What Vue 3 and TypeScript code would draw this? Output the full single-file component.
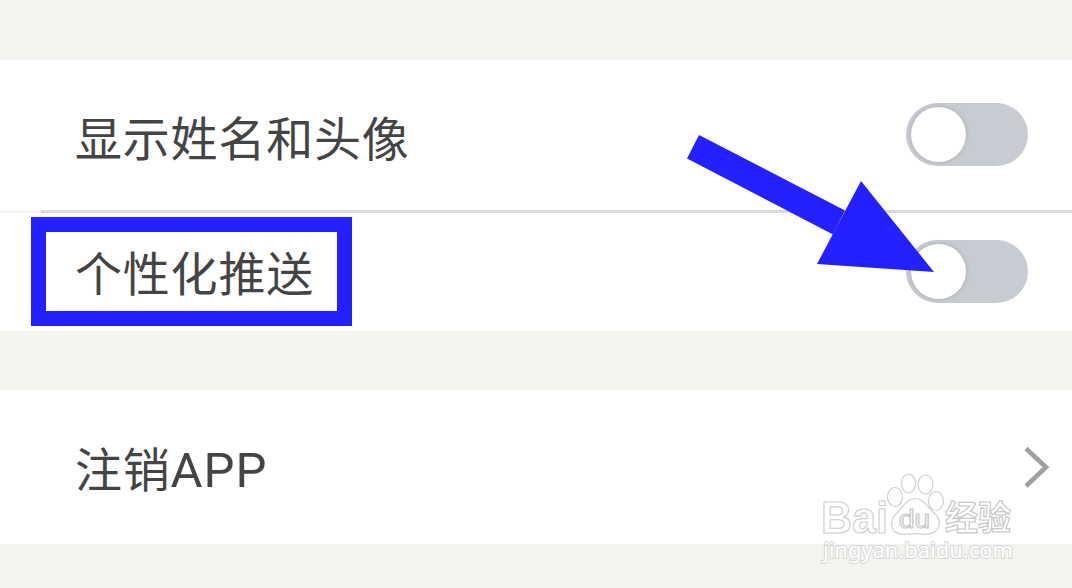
<script setup lang="ts">
import { ref } from 'vue'

interface Setting {
  label: string
  on: boolean
  marked: boolean
}

const settings = ref<Setting[]>([
  { label: '显示姓名和头像', on: false, marked: false },
  { label: '个性化推送', on: false, marked: true },
])
</script>

<template>
  <main class="screen">
    <section class="group">
      <div v-for="item in settings" :key="item.label" class="row" :class="{ second: item.marked }">
        <span class="label">{{ item.label }}</span>
        <span v-if="item.marked" class="frame"></span>
        <button class="toggle" :class="{ on: item.on }" :aria-label="item.label" @click="item.on = !item.on">
          <span class="knob"></span>
        </button>
      </div>
    </section>
    <section class="group account">
      <div class="row last">
        <span class="label">注销<span class="latin">APP</span></span>
        <svg class="chevron" width="28" height="44" viewBox="0 0 28 44">
          <path d="M3 3.500 L23 22.300 L3 41" fill="none" stroke="#a0a0a0" stroke-width="4.600" />
        </svg>
      </div>
    </section>

    <svg class="overlay" width="1072" height="588" viewBox="0 0 1072 588">
      <g fill="#2420ff">
        <path d="M699 135 L845 210.500 L833 234.500 L687 158.500 Z" />
        <path d="M861 181 L934 272 L817 264 Z" />
      </g>
      <g class="mark">
        <ellipse cx="895" cy="497" rx="7.500" ry="9.500" />
        <ellipse cx="908.500" cy="483.500" rx="7" ry="9.500" />
        <ellipse cx="925.500" cy="484.500" rx="7.500" ry="9.500" />
        <ellipse cx="936" cy="501" rx="7.500" ry="9.500" />
        <path d="M915 498.500 C924 498.500 927 507 934 513 C940 518 941 525 937 530 C932 536 923 534 915 533.500 C907 534 899 536 894 531 C890 526 891 518 897 513 C903 508 906 498.500 915 498.500 Z" />
        <text class="brand" x="821" y="533" textLength="67" lengthAdjust="spacingAndGlyphs">Bai</text>
        <text class="du" x="899" y="528" textLength="31" lengthAdjust="spacingAndGlyphs">du</text>
        <text class="cjk" x="945" y="530" textLength="66" lengthAdjust="spacingAndGlyphs">经验</text>
        <text class="site" x="823" y="558" textLength="190" lengthAdjust="spacingAndGlyphs">jingyan.baidu.com</text>
      </g>
    </svg>
  </main>
</template>

<style>
body {
  margin: 0;
  overflow: hidden;
}
</style>

<style scoped>
.screen {
  position: relative;
  box-sizing: border-box;
  width: 1072px;
  height: 588px;
  padding-top: 60px;
  background: #f4f3ef;
  overflow: hidden;
  font-family: 'Noto Sans CJK SC', sans-serif;
}
.group {
  background: #fff;
}
.account {
  margin-top: 59px;
}
.row {
  position: relative;
  display: flex;
  justify-content: space-between;
  box-sizing: border-box;
  height: 150px;
  padding: 0 44px 0 75px;
}
.second {
  height: 121px;
}
.second::before {
  content: '';
  position: absolute;
  left: 0;
  right: 0;
  top: 0;
  height: 3px;
  background: linear-gradient(90deg, #f5f5f5 41px, #dadada 41px);
}
.last {
  height: 154px;
  padding-right: 21px;
}
.label {
  margin-top: 41px;
  line-height: 70px;
  font-size: 47px;
  letter-spacing: 0.8px;
  color: #444;
  white-space: nowrap;
}
.second .label {
  margin-top: 26px;
}
.last .label {
  margin-top: 42px;
}
.latin {
  font-family: Roboto, sans-serif;
  font-size: 49px;
  letter-spacing: 1px;
}
.frame {
  position: absolute;
  left: 31px;
  top: 7px;
  box-sizing: border-box;
  width: 321px;
  height: 109px;
  border: 15px solid #2420ff;
}
.toggle {
  box-sizing: border-box;
  width: 122px;
  height: 63px;
  margin: 43px 0 0;
  padding: 4px 5px;
  border: 0;
  border-radius: 32px;
  background: #c7ccd3;
}
.second .toggle {
  margin-top: 30px;
}
.knob {
  display: block;
  width: 55px;
  height: 55px;
  border-radius: 50%;
  background: #fff;
  box-shadow: 0 0 4px rgba(125, 115, 105, 0.4);
}
.on .knob {
  margin-left: 57px;
}
.chevron {
  margin-top: 55px;
}
.overlay {
  position: absolute;
  left: 0;
  top: 0;
  pointer-events: none;
}
.mark {
  fill: #fff;
  stroke: #d0d0d0;
  stroke-width: 1.2;
}
.mark .brand {
  font: bold 45px 'Liberation Sans', sans-serif;
}
.mark .du {
  font: 26px 'Liberation Sans', sans-serif;
  stroke: #c8c8c8;
}
.mark .cjk {
  font: bold 34px 'Noto Sans CJK SC', sans-serif;
  stroke: #c8c8c8;
}
.mark .site {
  font: 22px 'Noto Sans', sans-serif;
  stroke: #d6d6d6;
  stroke-width: 2;
  paint-order: stroke;
}
</style>
